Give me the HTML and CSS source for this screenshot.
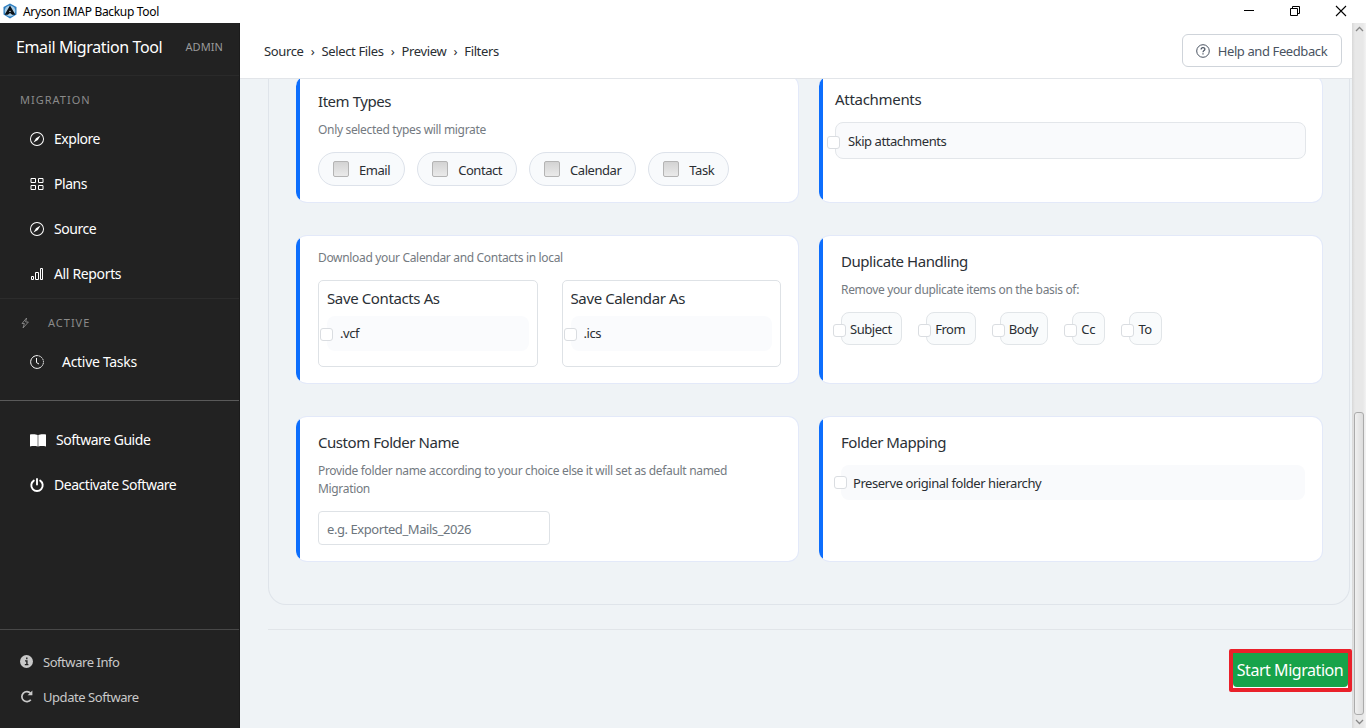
FILE: index.html
```html
<!DOCTYPE html>
<html lang="en">
<head>
    <meta charset="UTF-8">
    <meta name="viewport" content="width=device-width, initial-scale=1.0">
    <title>Aryson IMAP Backup Tool</title>
    <link rel="stylesheet" href="styles.css">
</head>
<body>
    <div class="titlebar">
        <svg class="app-logo" width="14" height="16" viewBox="0 0 14 16">
            <path d="M7 0.5 L13.5 4 V11.5 L7 15.5 L0.5 11.5 V4 Z" fill="#2f7fc1"/>
            <circle cx="7" cy="8" r="5.4" fill="#a9cde6"/>
            <path d="M7 2.4 L12.4 11.8 H9.2 L7 10 L4.8 11.8 H1.6 Z" fill="#0b1117"/>
            <path d="M7 7.4 L7.9 9 H6.1 Z" fill="#dfeaf2"/>
        </svg>
        <span class="app-name">Aryson IMAP Backup Tool</span>
        <div class="window-buttons">
            <svg width="12" height="12" viewBox="0 0 12 12"><path d="M1 5.5 H11" stroke="#000"/></svg>
            <svg width="12" height="12" viewBox="0 0 12 12" fill="none" stroke="#000"><path d="M1.5 3.5 H8.5 V10.5 H1.5 Z M3.5 3.5 V1.5 H10.5 V8.5 H8.5"/></svg>
            <svg width="12" height="12" viewBox="0 0 12 12"><path d="M1 1 L11 11 M11 1 L1 11" stroke="#000" stroke-width="1.1"/></svg>
        </div>
    </div>

    <div class="app">
        <div class="sidebar">
            <div class="brand">
                <span class="brand-name">Email Migration Tool</span>
                <span class="brand-role">ADMIN</span>
            </div>
            <div class="nav migration-nav">
                <div class="nav-label">MIGRATION</div>
                <a class="nav-item">
                    <svg width="14" height="14" viewBox="0 0 16 16" fill="currentColor"><path d="M8 16A8 8 0 1 0 8 0a8 8 0 0 0 0 16m0-1.1A6.9 6.9 0 1 1 8 1.1a6.9 6.9 0 0 1 0 13.8" fill-rule="evenodd"/><path d="m6.9 7.1 5.1-3.1-3 5.1L4 12z"/></svg>
                    <span class="nav-text">Explore</span>
                </a>
                <a class="nav-item">
                    <svg width="14" height="14" viewBox="0 0 14 14" fill="none" stroke="currentColor"><path d="M1 1.500h4.500v4h-4.500zM8.500 1.500h4.500v4h-4.500zM1 8.500h4.500v4h-4.500zM8.500 8.500h4.500v4h-4.500z"/></svg>
                    <span class="nav-text">Plans</span>
                </a>
                <a class="nav-item">
                    <svg width="14" height="14" viewBox="0 0 16 16" fill="currentColor"><path d="M8 16A8 8 0 1 0 8 0a8 8 0 0 0 0 16m0-1.1A6.9 6.9 0 1 1 8 1.1a6.9 6.9 0 0 1 0 13.8" fill-rule="evenodd"/><path d="m6.9 7.1 5.1-3.1-3 5.1L4 12z"/></svg>
                    <span class="nav-text">Source</span>
                </a>
                <a class="nav-item reports">
                    <svg width="14" height="14" viewBox="0 0 14 14" fill="none" stroke="currentColor"><path d="M1.500 9.500h2v3h-2zM5.500 5.500h3v7h-3zM10.500 1.500h2v11h-2z"/></svg>
                    <span class="nav-text">All Reports</span>
                </a>
            </div>
            <div class="nav active-nav">
                <div class="nav-label">
                    <svg width="10" height="12" viewBox="0 0 10 12" fill="none" stroke="currentColor" stroke-width=".9"><path d="M6.6 1 L2 6.5 H4.4 L3 11 L8.4 5 H5.6 Z"/></svg>
                    <span>ACTIVE</span>
                </div>
                <a class="nav-item tasks">
                    <svg width="14" height="14" viewBox="0 0 14 14" fill="none" stroke="currentColor"><path d="M7 .6A6.4 6.4 0 1 0 11.4 11.7"/><path d="M7 .6A6.4 6.4 0 0 1 11.4 11.7" stroke-dasharray="1.6 .6"/><path d="M6.5 3 V7.6 L9 9"/></svg>
                    <span class="nav-text">Active Tasks</span>
                </a>
            </div>
            <div class="nav guide-nav">
                <a class="nav-item guide">
                    <svg width="16" height="13" viewBox="0 0 16 13"><path d="M0 .5 C3 0 6 .2 7.700 1 V12.500 C5.500 11.900 2.500 11.900 0 12.500 Z M16 .5 C13 0 10 .2 8.300 1 V12.500 C10.500 11.900 13.500 11.900 16 12.500 Z" fill="currentColor"/></svg>
                    <span class="nav-text">Software Guide</span>
                </a>
                <a class="nav-item power">
                    <svg width="14" height="14" viewBox="0 0 14 14" fill="none" stroke="currentColor" stroke-width="1.9" stroke-linecap="round"><path d="M7 1 V6.500"/><path d="M3.800 2.600 A5.700 5.700 0 1 0 10.200 2.600"/></svg>
                    <span class="nav-text">Deactivate Software</span>
                </a>
            </div>
            <div class="sidebar-footer">
                <a class="footer-item">
                    <svg width="13" height="13" viewBox="0 0 13 13"><circle cx="6.500" cy="6.500" r="6.500" fill="currentColor"/><path d="M6.800 2.400 V4.200 M5 5.900 H6.900 V9.500 M4.800 9.600 H8.400" stroke="#222" stroke-width="1.400" fill="none"/></svg>
                    <span>Software Info</span>
                </a>
                <a class="footer-item">
                    <svg width="13" height="13" viewBox="0 0 13 13" fill="none" stroke="currentColor" stroke-width="1.700"><path d="M10.600 3.300 A5 5 0 1 0 10.800 9.700"/><path d="M12.400 .4 V5.200 H7.600 Z" fill="currentColor" stroke="none"/></svg>
                    <span>Update Software</span>
                </a>
            </div>
        </div>

        <div class="main">
            <div class="topbar">
                <div class="breadcrumb">
                    <span>Source</span><i>›</i><span>Select Files</span><i>›</i><span>Preview</span><i>›</i><span>Filters</span>
                </div>
                <button class="help-button">
                    <svg width="14" height="14" viewBox="0 0 14 14" fill="none" stroke="currentColor"><circle cx="7" cy="7" r="6.300"/><path d="M5.100 5.600 C5.100 3 9 3.200 8.900 5.300 C8.900 6.600 7 6.500 7 8.200 M7 9.300 V10.500" stroke-width="1.200"/></svg>
                    <span>Help and Feedback</span>
                </button>
            </div>

            <div class="content">
                <div class="panel">
                    <div class="card item-types">
                        <h3>Item Types</h3>
                        <p class="hint">Only selected types will migrate</p>
                        <div class="chips">
                            <label class="chip"><span class="native-box"></span>Email</label>
                            <label class="chip"><span class="native-box"></span>Contact</label>
                            <label class="chip"><span class="native-box"></span>Calendar</label>
                            <label class="chip"><span class="native-box"></span>Task</label>
                        </div>
                    </div>
                    <div class="card attachments">
                        <h3>Attachments</h3>
                        <label class="option bordered"><span class="box"></span>Skip attachments</label>
                    </div>
                    <div class="card downloads">
                        <p class="hint">Download your Calendar and Contacts in local</p>
                        <div class="save-row">
                            <div class="save-box">
                                <h3>Save Contacts As</h3>
                                <label class="option"><span class="box"></span>.vcf</label>
                            </div>
                            <div class="save-box">
                                <h3>Save Calendar As</h3>
                                <label class="option"><span class="box"></span>.ics</label>
                            </div>
                        </div>
                    </div>
                    <div class="card duplicates">
                        <h3>Duplicate Handling</h3>
                        <p class="hint">Remove your duplicate items on the basis of:</p>
                        <div class="pills">
                            <label class="pill"><span class="box"></span>Subject</label>
                            <label class="pill"><span class="box"></span>From</label>
                            <label class="pill"><span class="box"></span>Body</label>
                            <label class="pill"><span class="box"></span>Cc</label>
                            <label class="pill"><span class="box"></span>To</label>
                        </div>
                    </div>
                    <div class="card folder-name">
                        <h3>Custom Folder Name</h3>
                        <p class="hint">Provide folder name according to your choice else it will set as default named Migration</p>
                        <input type="text" placeholder="e.g. Exported_Mails_2026">
                    </div>
                    <div class="card mapping">
                        <h3>Folder Mapping</h3>
                        <label class="option"><span class="box"></span>Preserve original folder hierarchy</label>
                    </div>
                </div>
                <div class="actions">
                    <div class="highlight">
                        <button class="start-button">Start Migration</button>
                    </div>
                </div>
            </div>
        </div>

        <div class="scrollbar">
            <svg width="9" height="6" viewBox="0 0 9 6" fill="none" stroke="#888" stroke-width="1.300"><path d="M1 5 L4.500 1.500 L8 5"/></svg>
            <div class="thumb"></div>
            <svg width="9" height="6" viewBox="0 0 9 6" fill="none" stroke="#888" stroke-width="1.300"><path d="M1 1 L4.500 4.500 L8 1"/></svg>
        </div>
    </div>
</body>
</html>
```
FILE: styles.css
```css
* {
    margin: 0;
    padding: 0;
    box-sizing: border-box;
}

body {
    width: 1366px;
    height: 728px;
    overflow: hidden;
    background-color: #FFFFFF;
    font-family: "Segoe UI", "Noto Sans", "Open Sans", sans-serif;
    font-size: 13px;
    letter-spacing: -0.45px;
    color: #2A2E33;
}

svg {
    flex: none;
    display: block;
}

.titlebar {
    height: 23px;
    display: flex;
    align-items: center;
    padding: 0 19px 2px 3px;
}

.app-name {
    margin-left: 6px;
    padding-top: 2px;
    font-size: 12px;
    line-height: 20px;
    letter-spacing: -0.32px;
    color: #000000;
}

.window-buttons {
    margin-left: auto;
    display: flex;
    gap: 34px;
}

.app {
    display: flex;
    height: 705px;
}

/* Sidebar */
.sidebar {
    width: 240px;
    flex: none;
    display: flex;
    flex-direction: column;
    background-color: #222222;
    color: #FFFFFF;
    border-right: 1px solid #1B1B1B;
}

.brand {
    height: 53px;
    display: flex;
    align-items: center;
    justify-content: space-between;
    padding: 0 16px 5px;
    border-bottom: 1px solid #2A2A2A;
}

.brand-name {
    font-size: 16px;
    letter-spacing: -0.38px;
}

.brand-role {
    font-size: 11px;
    letter-spacing: 0.1px;
    color: #9A9A9A;
}

.nav-label {
    display: flex;
    align-items: center;
    padding-left: 20px;
    font-size: 11px;
    letter-spacing: 1px;
    color: #8A8A8A;
}

.nav-item {
    display: flex;
    align-items: center;
    gap: 10px;
    height: 45px;
    padding-left: 30px;
    font-size: 14px;
    letter-spacing: -0.47px;
}

.nav-text {
    padding-bottom: 1px;
}

.nav {
    height: 223px;
    border-bottom: 1px solid #2C2C2C;
}

.migration-nav .nav-label {
    height: 40px;
    padding-top: 7px;
}

.reports {
    letter-spacing: -0.35px;
}

.active-nav {
    height: 102px;
    border-bottom-color: #5A5A5A;
}

.active-nav .nav-label {
    gap: 18px;
    height: 48px;
}

.active-nav .nav-label span {
    padding-bottom: 2px;
}

.active-nav .nav-item {
    gap: 18px;
    height: 30px;
    letter-spacing: -0.3px;
}

.guide-nav {
    height: auto;
    padding-top: 17px;
    border-bottom: none;
}

.guide-nav .nav-text {
    padding-bottom: 2px;
}

.power svg {
    margin-bottom: 2px;
}

.sidebar-footer {
    margin-top: auto;
    height: 99px;
    padding: 15px 0 0 20px;
    border-top: 1px solid #484848;
}

.footer-item {
    display: flex;
    align-items: center;
    gap: 10px;
    height: 35px;
    font-size: 13px;
    color: #C9C9C9;
}

.footer-item svg {
    margin-bottom: 2px;
}

.footer-item span {
    padding-bottom: 2px;
}

/* Top bar */
.main {
    flex: 1;
    display: flex;
    flex-direction: column;
}

.topbar {
    height: 56px;
    display: flex;
    align-items: center;
    justify-content: space-between;
    padding: 0 10px 0 24px;
    background-color: #FFFFFF;
    border-bottom: 1px solid #E2E5E9;
}

.breadcrumb {
    display: flex;
    font-size: 13px;
    letter-spacing: -0.37px;
}

.breadcrumb i {
    width: 18px;
    text-align: center;
    font-style: normal;
}

.help-button {
    display: flex;
    align-items: center;
    justify-content: center;
    gap: 8px;
    width: 160px;
    height: 33px;
    padding-right: 1px;
    background-color: #FFFFFF;
    border: 1px solid #CFD4DA;
    border-radius: 6px;
    font: inherit;
    letter-spacing: -0.4px;
    color: #495361;
}

/* Filter cards */
.content {
    flex: 1;
    padding-left: 28px;
    overflow: hidden;
    background-color: #EFF3F6;
}

.panel {
    display: grid;
    grid-template-columns: 503px 504px;
    grid-template-rows: 128px 149px 146px;
    gap: 32px 20px;
    width: 1082px;
    height: 530px;
    margin-top: -4px;
    padding: 0 0 0 27px;
    border: 1px solid #DFE4EA;
    border-top: none;
    border-radius: 0 0 18px 18px;
}

.card {
    padding: 15px 17px 0 22px;
    border: 1px solid #E3E9F9;
    border-left: none;
    border-radius: 11px;
    background: linear-gradient(to right, #0D6EFD 4px, #FFFFFF 4px) border-box;
}

.card h3 {
    font-size: 15px;
    font-weight: 400;
    line-height: 20px;
    letter-spacing: -0.45px;
    color: #2B3036;
}

.hint {
    font-size: 12px;
    line-height: 18px;
    letter-spacing: -0.33px;
    color: #747A81;
}

.box {
    flex: none;
    width: 13px;
    height: 13px;
    border: 1px solid #DADDE1;
    border-radius: 3px;
    background-color: #FFFFFF;
}

.item-types .hint {
    margin-top: 10px;
}

.chips {
    display: flex;
    gap: 12px;
    margin-top: 13px;
}

.chip {
    display: flex;
    align-items: center;
    gap: 10px;
    height: 34px;
    padding: 1px 14px 0;
    border: 1px solid #DDE2EA;
    border-radius: 17px;
    background-color: #F8FAFC;
}

.native-box {
    width: 16px;
    height: 16px;
    margin-bottom: 1px;
    border: 1px solid #B4B4B4;
    border-radius: 2px;
    background: linear-gradient(#D3D3D3, #EAEAEA);
}

.option {
    display: flex;
    align-items: center;
    gap: 7px;
    height: 35px;
    border-radius: 8px;
    background-color: #F9FAFC;
}

.option .box {
    margin-left: -7px;
}

.attachments {
    padding: 13px 16px 0;
}

.attachments h3 {
    letter-spacing: -0.3px;
}

.option.bordered {
    gap: 8px;
    height: 37px;
    margin-top: 13px;
    border: 1px solid #E3E6EA;
}

.option.bordered .box {
    margin-top: 3px;
    margin-left: -9px;
}

.save-row {
    display: flex;
    gap: 24px;
    margin-top: 13px;
}

.downloads {
    padding-top: 13px;
}

.save-box {
    width: 220px;
    height: 87px;
    padding: 7px 8px;
    border: 1px solid #DEE2E6;
    border-radius: 5px;
}

.save-box h3 {
    letter-spacing: -0.38px;
}

.save-box .option {
    margin-top: 8px;
    padding-bottom: 1px;
    background-color: #FAFBFD;
}

.save-box .box {
    margin-top: 3px;
}

.duplicates .hint {
    margin-top: 10px;
}

.pills {
    display: flex;
    gap: 24px;
    margin-top: 13px;
}

.pill {
    display: flex;
    align-items: center;
    gap: 4px;
    height: 33px;
    padding-right: 9.5px;
    border: 1px solid #E1E5E8;
    border-radius: 8px;
    background-color: #F9FBFC;
}

.pill .box {
    margin-top: 3px;
    margin-left: -9px;
}

.folder-name .hint {
    width: 430px;
    margin-top: 10px;
}

.folder-name input {
    display: block;
    width: 232px;
    height: 34px;
    margin-top: 13px;
    padding: 2px 8px 0;
    border: 1px solid #DEE2E6;
    border-radius: 4px;
    font: inherit;
    letter-spacing: -0.43px;
}

.folder-name input::placeholder {
    color: #6C757D;
}

.mapping .option {
    gap: 6px;
    margin-top: 13px;
}

/* Bottom actions */
.actions {
    display: flex;
    justify-content: flex-end;
    margin-top: 24px;
    padding-top: 19px;
    border-top: 1px solid #E1E5E9;
}

.highlight {
    width: 123px;
    height: 43px;
    border: 4px solid #E9202A;
    border-radius: 2px;
    background-color: #FFFFFF;
}

.start-button {
    display: block;
    width: 115px;
    height: 34px;
    padding-right: 1px;
    border: none;
    border-radius: 0 0 4px 4px;
    background-color: #17A34A;
    color: #FFFFFF;
    font: inherit;
    font-size: 16px;
    letter-spacing: -0.45px;
    white-space: nowrap;
}

/* Scrollbar */
.scrollbar {
    width: 14px;
    flex: none;
    display: flex;
    flex-direction: column;
    align-items: center;
    padding: 3px 0;
    background: linear-gradient(to right, #D8D8D8, #E8E8E8 3px, #E8E8E8 11px, #F3F3F3);
}

.thumb {
    width: 10px;
    height: 303px;
    margin-top: auto;
    margin-bottom: 4px;
    border: 1px solid #ABABAB;
    border-radius: 3px;
    background: linear-gradient(to right, #F0F0F0, #DCDCDC);
}
```
